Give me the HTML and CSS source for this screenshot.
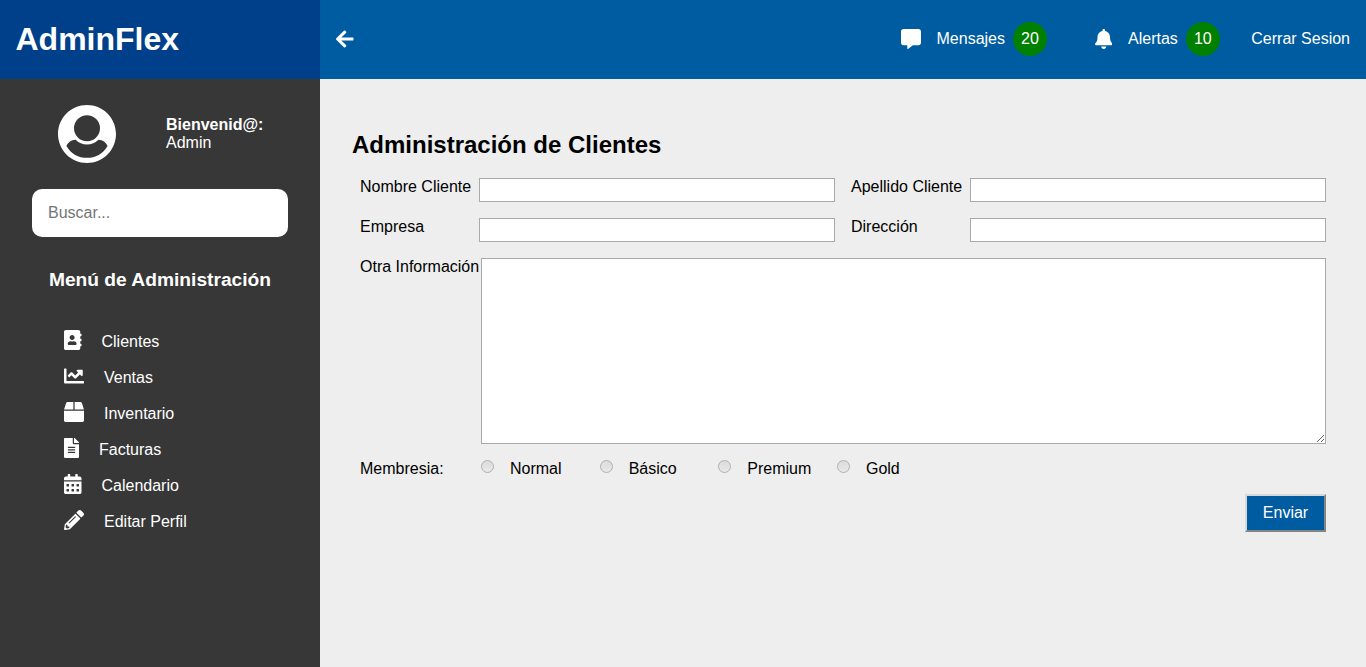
FILE: index.html
```html
<!DOCTYPE html>
<html lang="es">
<head>
    <meta charset="UTF-8">
    <title>AdminFlex</title>
    <link rel="stylesheet" href="styles.css">
</head>
<body>
<div class="layout">
    <header class="header">
        <div class="brand">AdminFlex</div>
        <nav class="topbar">
            <svg class="icon back" viewBox="0 0 448 512"><path d="M257.5 445.1l-22.2 22.2c-9.4 9.4-24.6 9.4-33.9 0L7 273c-9.4-9.4-9.4-24.6 0-33.9L201.4 44.7c9.4-9.4 24.6-9.4 33.9 0l22.2 22.2c9.5 9.5 9.3 25-.4 34.3L136.6 216H424c13.3 0 24 10.7 24 24v32c0 13.3-10.7 24-24 24H136.6l120.5 114.8c9.8 9.3 10 24.8.4 34.3z"/></svg>
            <div class="top-links">
                <a class="top-link">
                    <svg class="icon top-icon w512" viewBox="0 0 512 512"><path d="M448 0H64C28.7 0 0 28.7 0 64v288c0 35.3 28.7 64 64 64h96v84c0 9.8 11.2 15.5 19.1 9.7L304 416h144c35.3 0 64-28.7 64-64V64c0-35.3-28.7-64-64-64z"/></svg>
                    Mensajes <span class="badge">20</span>
                </a>
                <a class="top-link">
                    <svg class="icon top-icon w448" viewBox="0 0 448 512"><path d="M224 512c35.32 0 63.97-28.65 63.97-64H160.03c0 35.35 28.65 64 63.97 64zm215.39-149.71c-19.32-20.76-55.47-51.99-55.47-154.29 0-77.7-54.48-139.9-127.94-155.16V32c0-17.67-14.32-32-31.98-32s-31.98 14.33-31.98 32v20.84C118.56 68.1 64.08 130.3 64.08 208c0 102.3-36.15 133.53-55.47 154.29-6 6.45-8.66 14.16-8.61 21.71.11 16.4 12.98 32 32.1 32h383.8c19.12 0 32-15.6 32.1-32 .05-7.55-2.61-15.27-8.61-21.71z"/></svg>
                    Alertas <span class="badge">10</span>
                </a>
                <a class="top-link">Cerrar Sesion</a>
            </div>
        </nav>
    </header>

    <aside class="sidebar">
        <div class="user">
            <svg class="icon avatar" viewBox="0 0 496 496"><path fill-rule="evenodd" d="M248 0C111 0 0 111 0 248s111 248 248 248 248-111 248-248S385 0 248 0zM248 88a111 111 0 1 0 0 222a111 111 0 1 0 0-222zM72 350C85 322 115 298 150 298A140 140 0 0 0 346 298C381 298 411 322 424 350C385 418 320 452 248 452C176 452 111 418 72 350z"/></svg>
            <div class="user-text"><strong>Bienvenid@:</strong><br>Admin</div>
        </div>
        <input class="search" type="text" placeholder="Buscar...">
        <h3 class="menu-title">Menú de Administración</h3>
        <ul class="menu">
            <li><svg class="icon menu-icon w448" viewBox="0 0 448 512"><path d="M436 160c6.6 0 12-5.4 12-12v-40c0-6.6-5.4-12-12-12h-20V48c0-26.5-21.5-48-48-48H48C21.5 0 0 21.5 0 48v416c0 26.5 21.5 48 48 48h320c26.5 0 48-21.5 48-48v-48h20c6.6 0 12-5.4 12-12v-40c0-6.6-5.4-12-12-12h-20v-64h20c6.6 0 12-5.4 12-12v-40c0-6.6-5.4-12-12-12h-20v-64h20zm-228-32c35.3 0 64 28.7 64 64s-28.7 64-64 64-64-28.7-64-64 28.7-64 64-64zm112 236.8c0 10.6-10 19.2-22.4 19.2H118.4C106 384 96 375.4 96 364.8v-19.2c0-31.8 30.1-57.6 67.2-57.6h5c12.3 5.1 25.7 8 39.8 8s27.6-2.9 39.8-8h5c37.1 0 67.2 25.8 67.2 57.6v19.2z"/></svg>Clientes</li>
            <li><svg class="icon menu-icon w512" viewBox="0 0 512 512"><path d="M496 384H64V80c0-8.84-7.16-16-16-16H16C7.16 64 0 71.16 0 80v336c0 17.67 14.33 32 32 32h464c8.84 0 16-7.16 16-16v-32c0-8.84-7.16-16-16-16zM464 96H345.94c-21.38 0-32.09 25.85-16.97 40.97l32.4 32.4L288 242.75l-73.37-73.37c-12.5-12.5-32.76-12.5-45.25 0l-68.69 68.69c-6.25 6.25-6.25 16.38 0 22.63l22.62 22.62c6.25 6.25 16.38 6.25 22.63 0L192 237.25l73.37 73.37c12.5 12.5 32.76 12.5 45.25 0l96-96 32.4 32.4c15.12 15.12 40.97 4.41 40.97-16.97V112c.01-8.84-7.15-16-15.99-16z"/></svg>Ventas</li>
            <li><svg class="icon menu-icon w512" viewBox="0 0 512 512"><path d="M509.5 184.6L458.9 32.8C452.4 13.2 434.1 0 413.4 0H272v192h238.7c-.4-2.5-.4-5-1.2-7.4zM240 0H98.6c-20.7 0-39 13.2-45.5 32.8L2.5 184.6c-.8 2.4-.8 4.9-1.2 7.4H240V0zM0 224v240c0 26.5 21.5 48 48 48h416c26.5 0 48-21.5 48-48V224H0z"/></svg>Inventario</li>
            <li><svg class="icon menu-icon w384" viewBox="0 0 384 512"><path d="M224 136V0H24C10.7 0 0 10.7 0 24v464c0 13.3 10.7 24 24 24h336c13.3 0 24-10.7 24-24V160H248c-13.2 0-24-10.8-24-24zm64 236c0 6.6-5.4 12-12 12H108c-6.6 0-12-5.4-12-12v-8c0-6.6 5.4-12 12-12h168c6.6 0 12 5.4 12 12v8zm0-64c0 6.6-5.4 12-12 12H108c-6.6 0-12-5.4-12-12v-8c0-6.6 5.4-12 12-12h168c6.6 0 12 5.4 12 12v8zm0-72v8c0 6.6-5.4 12-12 12H108c-6.6 0-12-5.4-12-12v-8c0-6.6 5.4-12 12-12h168c6.6 0 12 5.4 12 12zm96-114.1v6.1H256V0h6.1c6.4 0 12.5 2.5 17 7l97.9 98c4.5 4.5 7 10.6 7 16.9z"/></svg>Facturas</li>
            <li><svg class="icon menu-icon w448" viewBox="0 0 448 512"><path d="M0 464c0 26.5 21.5 48 48 48h352c26.5 0 48-21.5 48-48V192H0v272zm320-196c0-6.6 5.4-12 12-12h40c6.6 0 12 5.4 12 12v40c0 6.6-5.4 12-12 12h-40c-6.6 0-12-5.4-12-12v-40zm0 128c0-6.6 5.4-12 12-12h40c6.6 0 12 5.4 12 12v40c0 6.6-5.4 12-12 12h-40c-6.6 0-12-5.4-12-12v-40zM192 268c0-6.6 5.4-12 12-12h40c6.6 0 12 5.4 12 12v40c0 6.6-5.4 12-12 12h-40c-6.6 0-12-5.4-12-12v-40zm0 128c0-6.6 5.4-12 12-12h40c6.6 0 12 5.4 12 12v40c0 6.6-5.4 12-12 12h-40c-6.6 0-12-5.4-12-12v-40zM64 268c0-6.6 5.4-12 12-12h40c6.6 0 12 5.4 12 12v40c0 6.6-5.4 12-12 12H76c-6.6 0-12-5.4-12-12v-40zm0 128c0-6.6 5.4-12 12-12h40c6.6 0 12 5.4 12 12v40c0 6.6-5.4 12-12 12H76c-6.6 0-12-5.4-12-12v-40zM400 64h-48V16c0-8.8-7.2-16-16-16h-32c-8.8 0-16 7.2-16 16v48H160V16c0-8.8-7.2-16-16-16h-32c-8.8 0-16 7.2-16 16v48H48C21.5 64 0 85.5 0 112v48h448v-48c0-26.5-21.5-48-48-48z"/></svg>Calendario</li>
            <li><svg class="icon menu-icon w512" viewBox="0 0 512 512"><path d="M497.9 142.1l-46.1 46.1c-4.7 4.7-12.3 4.7-17 0l-111-111c-4.7-4.7-4.7-12.3 0-17l46.1-46.1c18.7-18.7 49.1-18.7 67.9 0l60.1 60.1c18.8 18.7 18.8 49.1 0 67.9zM284.2 99.8L21.6 362.4.4 483.9c-2.9 16.4 11.4 30.6 27.8 27.8l121.5-21.3 262.6-262.6c4.7-4.7 4.7-12.3 0-17l-111-111c-4.8-4.7-12.4-4.7-17.1 0zM124.1 339.9c-5.5-5.5-5.5-14.3 0-19.8l154-154c5.5-5.5 14.3-5.5 19.8 0s5.5 14.3 0 19.8l-154 154c-5.5 5.5-14.3 5.5-19.8 0zM88 424h48v36.3l-64.5 11.3-31.1-31.1L51.7 376H88v48z"/></svg>Editar Perfil</li>
        </ul>
    </aside>

    <main class="content">
        <h2 class="page-title">Administración de Clientes</h2>
        <form class="form">
            <div class="row">
                <label class="field-label">Nombre Cliente</label>
                <input class="field" type="text">
                <label class="field-label second">Apellido Cliente</label>
                <input class="field" type="text">
            </div>
            <div class="row">
                <label class="field-label">Empresa</label>
                <input class="field" type="text">
                <label class="field-label second">Dirección</label>
                <input class="field" type="text">
            </div>
            <div class="row">
                <label class="area-label">Otra Información</label>
                <textarea class="area"></textarea>
            </div>
            <div class="row">
                <span class="area-label">Membresia:</span>
                <div class="radio-group">
                    <label class="radio"><input type="radio" name="membresia">Normal</label>
                    <label class="radio"><input type="radio" name="membresia">Básico</label>
                    <label class="radio"><input type="radio" name="membresia">Premium</label>
                    <label class="radio"><input type="radio" name="membresia">Gold</label>
                </div>
            </div>
            <div class="actions">
                <button class="send" type="button">Enviar</button>
            </div>
        </form>
    </main>
</div>
</body>
</html>
```

FILE: styles.css
```css
* {
    box-sizing: border-box;
}

body {
    margin: 0;
    font-family: "Liberation Sans", Arial, sans-serif;
    font-size: 16px;
    color: #000;
    background: #eee;
}

.layout {
    display: grid;
    grid-template-columns: 320px 1fr;
    grid-template-rows: 79px 1fr;
    height: 100vh;
    overflow: hidden;
}

.icon {
    display: block;
    flex: none;
    height: 20px;
    fill: #fff;
}

.w384 {
    width: 15px;
}

.w448 {
    width: 17.5px;
}

.w512 {
    width: 20px;
}

/* header */
.header {
    grid-column: 1 / 3;
    display: flex;
    color: #fff;
}

.brand {
    width: 320px;
    padding-left: 15.5px;
    background: #003f8a;
    font-size: 32px;
    font-weight: bold;
    line-height: 78px;
}

.topbar {
    flex: 1;
    display: flex;
    align-items: center;
    justify-content: space-between;
    padding: 0 16px 2px;
    background: #005ca0;
}

.back {
    width: 17.5px;
}

.top-links {
    display: flex;
    align-items: center;
    gap: 31.5px;
}

.top-link {
    display: flex;
    align-items: center;
}

.top-icon {
    margin: 0 16px 0 16px;
}

.badge {
    width: 34px;
    height: 34px;
    margin-left: 8px;
    border-radius: 50%;
    background: #008000;
    line-height: 34px;
    text-align: center;
}

/* sidebar */
.sidebar {
    background: #373737;
    color: #fff;
}

.user {
    display: flex;
    align-items: center;
    padding: 26px 0 0 58px;
}

.avatar {
    width: 58px;
    height: 58px;
}

.user-text {
    margin-left: 50px;
    line-height: 18px;
}

.search {
    display: block;
    width: 256px;
    height: 48px;
    margin: 26px 0 0 32px;
    padding: 0 16px;
    border: 0;
    border-radius: 10px;
    background: #fff;
    font: 16px "Liberation Sans", Arial, sans-serif;
}

.menu-title {
    margin: 32px 0 0;
    font-size: 19.2px;
    line-height: 21px;
    text-align: center;
}

.menu {
    margin: 34px 0 0;
    padding: 0 0 0 64px;
    list-style: none;
}

.menu li {
    display: flex;
    align-items: center;
    height: 36px;
}

.menu-icon {
    margin: -4px 20px 0 0;
}

/* form */
.content {
    padding: 52px 40px 0 32px;
}

.page-title {
    margin: 0 0 19px;
    font-size: 24px;
    line-height: 28px;
}

.form {
    padding-left: 8px;
}

.row {
    display: flex;
    margin-bottom: 16px;
}

.field-label {
    flex: 0 0 119px;
    line-height: 18px;
}

.second {
    margin-left: 16px;
}

.field {
    flex: 1;
    min-width: 0;
    height: 24px;
    border: 1px solid #a9a9a9;
    background: #fff;
}

.area-label {
    flex: none;
    width: 121px;
    line-height: 18px;
}

.area {
    flex: 1;
    height: 186px;
    margin: 0;
    border: 1px solid #a9a9a9;
    background: #fff;
}

.radio-group {
    display: grid;
    grid-template-columns: repeat(4, 118.67px);
}

.radio {
    display: flex;
    line-height: 18px;
}

.radio input {
    appearance: none;
    width: 13px;
    height: 13px;
    margin: 0 16px 0 0;
    border: 1px solid #b0b0b0;
    border-radius: 50%;
    background: linear-gradient(#dcdcdc, #e8e8e8);
}

.actions {
    display: flex;
    justify-content: flex-end;
}

.send {
    width: 81px;
    height: 38px;
    border: 2px outset #d8d8d8;
    background: #005ca0;
    color: #fff;
    font: 16px "Liberation Sans", Arial, sans-serif;
}
```
